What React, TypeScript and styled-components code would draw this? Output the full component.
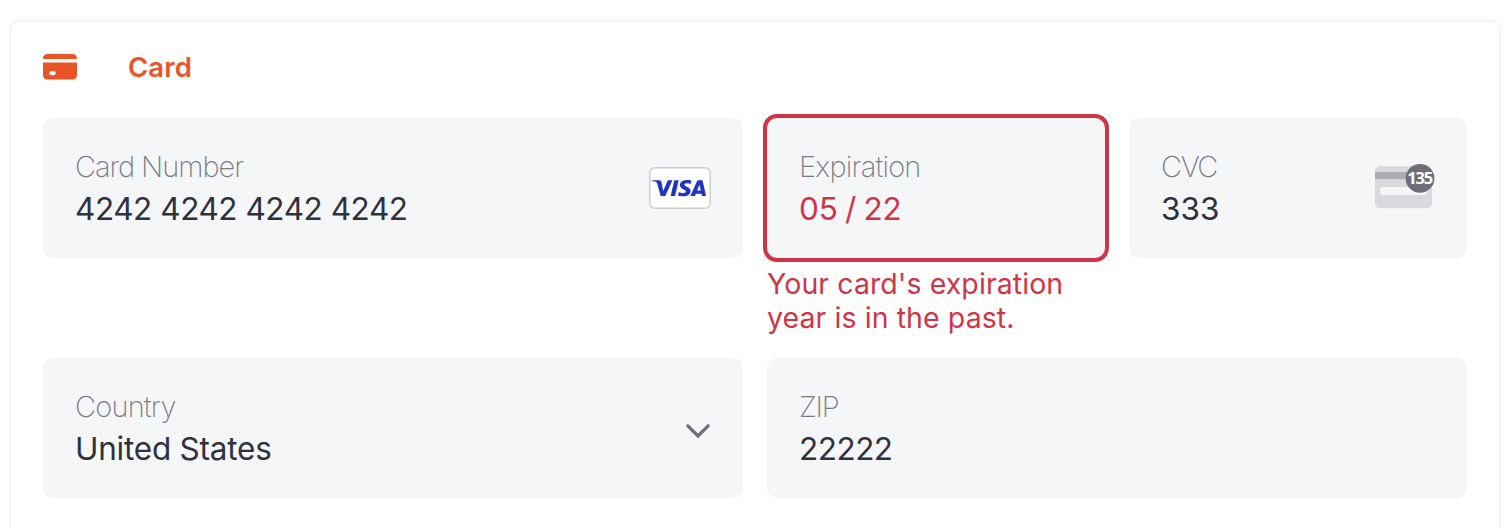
import React from "react";
import styled, { createGlobalStyle } from "styled-components";

const GlobalStyle = createGlobalStyle`
  * { box-sizing: border-box; }
  body {
    margin: 0;
    background: #ffffff;
    font-family: Inter, "Liberation Sans", sans-serif;
    overflow: hidden;
    -webkit-font-smoothing: antialiased;
  }
`;

const Page = styled.main`
  height: 528px;
  padding: 20px 9px 0;
  overflow: hidden;
`;

const Panel = styled.section`
  height: 560px;
  padding: 0 32px;
  border: 2px solid #f4f4f5;
  border-radius: 10px;
`;

const Header = styled.header`
  display: flex;
  align-items: center;
  gap: 51px;
  height: 96px;
  padding-bottom: 6px;
`;

const Title = styled.h2`
  margin: 0;
  color: #eb5428;
  font-size: 27.5px;
  font-weight: 600;
  line-height: 34px;
  letter-spacing: 0.1px;
`;

const Grid = styled.div`
  display: grid;
  grid-template-columns: 700px 338px 338px;
  grid-template-rows: 216px 140px;
  column-gap: 24px;
  row-gap: 24px;
`;

const Cell = styled.div<{ $span?: number }>`
  grid-column: span ${({ $span = 1 }) => $span};
`;

const Field = styled.label<{ $invalid?: boolean }>`
  display: flex;
  align-items: center;
  justify-content: space-between;
  height: 140px;
  padding: 0 32px;
  border-radius: 10px;
  background: #f4f6f8;
  box-shadow: ${({ $invalid }) => ($invalid ? "0 0 0 4px #cf3547" : "none")};
`;

const FieldText = styled.span`
  display: flex;
  flex-direction: column;
`;

const Label = styled.span<{ $tracking?: number }>`
  color: #7b7c85;
  font-size: 29px;
  font-weight: 200;
  line-height: 42px;
  letter-spacing: ${({ $tracking = -0.8 }) => $tracking}px;
  white-space: nowrap;
`;

const Value = styled.span<{ $invalid?: boolean; $tracking?: number; $wordGap?: number }>`
  color: ${({ $invalid }) => ($invalid ? "#cf3547" : "#30313d")};
  font-size: 31.5px;
  font-weight: 400;
  line-height: 42px;
  letter-spacing: ${({ $tracking = 0 }) => $tracking}px;
  word-spacing: ${({ $wordGap = 0 }) => $wordGap}px;
  white-space: nowrap;
`;

const ErrorText = styled.p`
  margin: 9px 0 0;
  color: #cf3547;
  font-size: 28.5px;
  line-height: 34px;
  letter-spacing: 0.08px;
`;

const CardGlyph = () => (
  <svg width="34" height="26" viewBox="0 0 34 26" fill="#eb5428">
    <path d="M0 5V4.3A4.3 4.3 0 0 1 4.3 0h25.4A4.3 4.3 0 0 1 34 4.3V5Z" />
    <path
      fillRule="evenodd"
      d="M0 8.5h34v12.7a4.3 4.3 0 0 1-4.3 4.3H4.3A4.3 4.3 0 0 1 0 21.2ZM8.5 17a2.1 2.1 0 0 0 0 4.2h2.2a2.1 2.1 0 0 0 0-4.2Z"
    />
  </svg>
);

const VisaBadge = () => (
  <svg width="62" height="42" viewBox="0 0 62 42">
    <rect x=".75" y=".75" width="60.5" height="40.5" rx="5" fill="#fff" stroke="#cfcfd1" strokeWidth="1.5" />
    <g transform="translate(2.8 13) scale(.0543 .0505)" fill="#2035c4">
      <path d="M651.19.5c-70.93 0-134.32 36.77-134.32 104.69 0 77.9 112.42 83.28 112.42 122.42 0 16.48-18.88 31.23-51.14 31.23-45.77 0-79.98-20.61-79.98-20.61l-14.64 68.55s39.41 17.41 91.73 17.41c77.55 0 138.58-38.57 138.58-107.66 0-82.32-112.89-87.54-112.89-123.86 0-12.91 15.5-27.05 47.66-27.05 36.29 0 65.89 14.99 65.89 14.99l14.33-66.2S696.61.5 651.18.5ZM2.22 5.5.5 15.49s29.84 5.46 56.72 16.36c34.61 12.49 37.07 19.77 42.9 42.35l63.51 244.83h85.14L379.93 5.5h-84.94L210.71 218.67l-34.39-180.7c-3.15-20.68-19.13-32.48-38.68-32.48H2.23Zm411.87 0-66.63 313.53h81L494.85 5.5h-80.76Zm451.76 0c-19.53 0-29.88 10.46-37.47 28.73L709.71 319.03h84.94l16.43-47.47h103.48l9.99 47.47h74.95L934.12 5.5h-68.27Zm11.05 84.71 25.18 117.65h-67.45L876.9 90.21Z" />
    </g>
  </svg>
);

const CvcText = styled.text`
  font-family: "Noto Sans", sans-serif;
  font-size: 16.5px;
  font-weight: 700;
  letter-spacing: -1.2px;
`;

const CvcGlyph = () => (
  <svg width="60" height="48" viewBox="0 0 60 48">
    <rect x="0" y="2.2" width="57" height="42" rx="5" fill="#d8dadd" />
    <rect x="0" y="8" width="57" height="7" fill="#acadb2" />
    <rect x="5" y="23" width="47" height="8" rx="3" fill="#f4f6f8" />
    <circle cx="45" cy="14.4" r="14.4" fill="#6d6e78" />
    <CvcText x="44.6" y="20.2" textAnchor="middle" fill="#fff">
      135
    </CvcText>
  </svg>
);

const ChevronWrap = styled.span`
  display: flex;
  padding-top: 5px;
`;

const Chevron = () => (
  <ChevronWrap>
    <svg width="26" height="16" viewBox="0 0 26 16" fill="none">
      <path d="M2.8 2.8l10.2 10.2L23.2 2.8" stroke="#6d6e78" strokeWidth="3.2" strokeLinecap="round" />
    </svg>
  </ChevronWrap>
);

interface FormFieldProps {
  label: string;
  value: string;
  labelTracking?: number;
  valueTracking?: number;
  wordGap?: number;
  span?: number;
  error?: string;
  icon?: React.ReactNode;
}

const FormField = ({ label, value, labelTracking, valueTracking, wordGap, span, error, icon }: FormFieldProps) => (
  <Cell $span={span}>
    <Field $invalid={!!error}>
      <FieldText>
        <Label $tracking={labelTracking}>{label}</Label>
        <Value $invalid={!!error} $tracking={valueTracking} $wordGap={wordGap}>
          {value}
        </Value>
      </FieldText>
      {icon}
    </Field>
    {error && <ErrorText>{error}</ErrorText>}
  </Cell>
);

export default function App() {
  return (
    <>
      <GlobalStyle />
      <Page>
        <Panel>
          <Header>
            <CardGlyph />
            <Title>Card</Title>
          </Header>
          <Grid>
            <FormField
              label="Card Number"
              value="4242 4242 4242 4242"
              labelTracking={-1.05}
              valueTracking={-0.45}
              icon={<VisaBadge />}
            />
            <FormField
              label="Expiration"
              value="05 / 22"
              valueTracking={-0.2}
              wordGap={-1.3}
              error="Your card's expiration year is in the past."
            />
            <FormField label="CVC" value="333" labelTracking={-1.4} icon={<CvcGlyph />} />
            <FormField label="Country" value="United States" valueTracking={-0.23} icon={<Chevron />} />
            <FormField label="ZIP" value="22222" labelTracking={-1.3} valueTracking={-0.5} span={2} />
          </Grid>
        </Panel>
      </Page>
    </>
  );
}
